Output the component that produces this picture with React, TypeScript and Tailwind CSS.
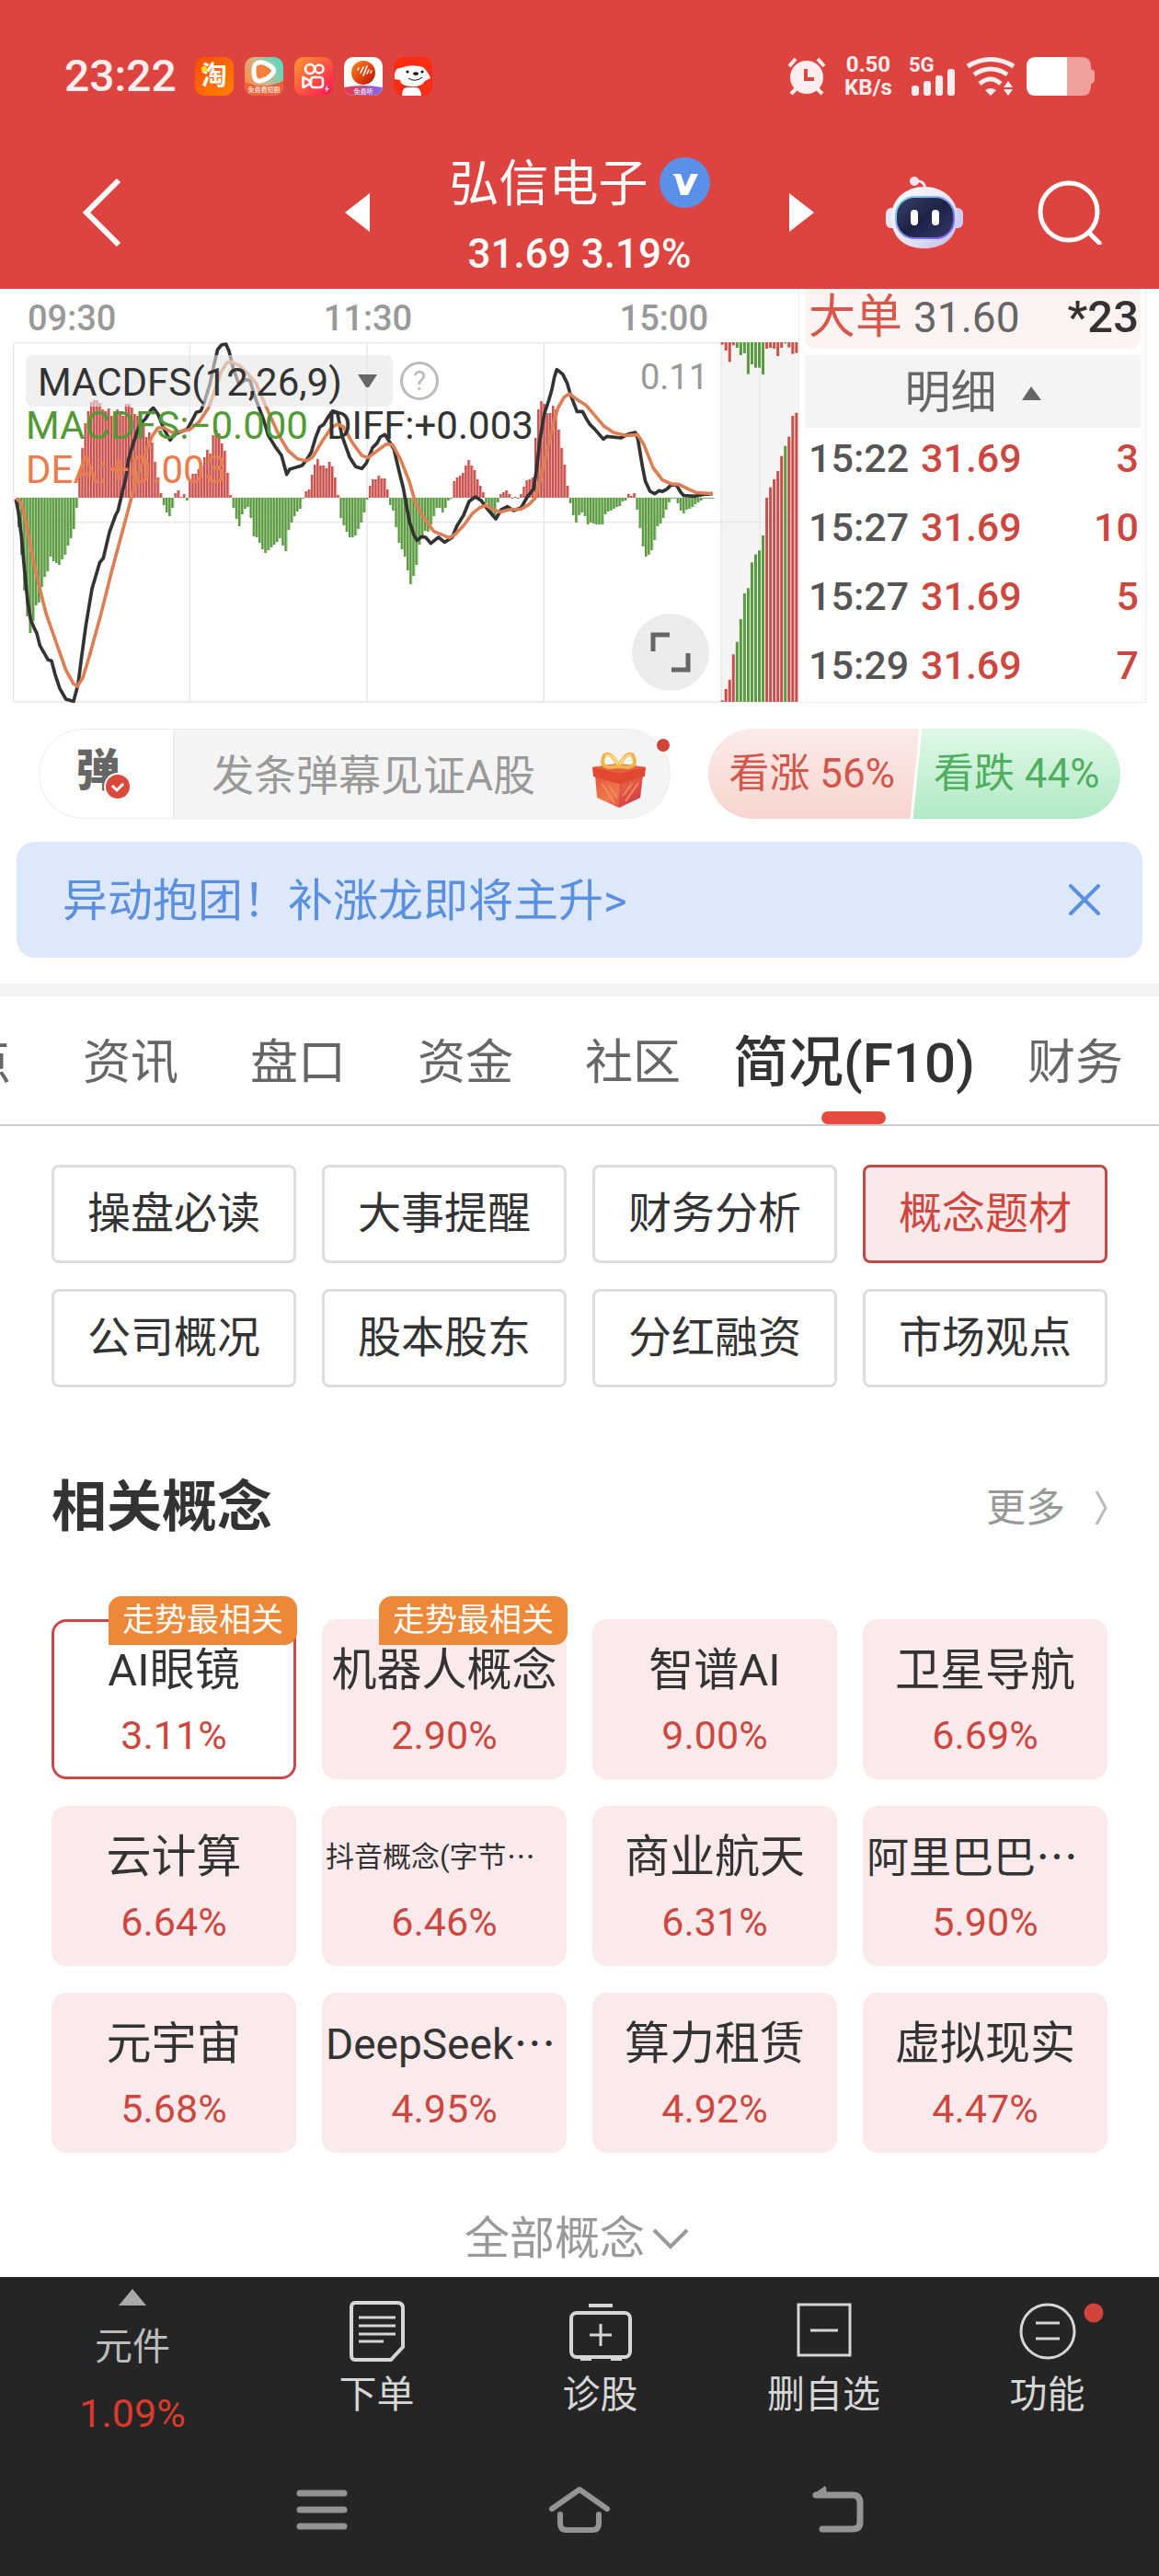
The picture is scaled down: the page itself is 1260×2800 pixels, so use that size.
import { ReactNode } from 'react';

const UP = '#c94f4b';
const DOWN = '#5a9a3f';

// one value per minute, height above or below the zero line
const macd = [
    -32, -62, -101, -129, -147, -134, -117, -114, -97, -86, -80, -64, -69, -71, -73, -67, -62, -52, -44, -34, -11,
    24, 54, 81, 94, 104, 106, 106, 103, 96, 94, 97, 89, 90, 96, 94, 89, 102, 102, 98, 91, 89, 79, 81, 66, 71, 60,
    39, 22, 5, -8, -16, -20, -11, 5, 8, 1, 4, -3, 18, 26, 26, 31, 34, 44, 52, 48, 68, 74, 70, 59, 51, 27, 3, -11,
    -23, -31, -18, -12, -10, -22, -42, -43, -49, -56, -60, -57, -54, -51, -48, -44, -52, -58, -35, -27, -20, -15,
    -12, -1, 7, 9, 25, 36, 42, 35, 35, 32, 39, 34, 22, 3, -22, -30, -37, -43, -43, -41, -34, -27, -16, -2, 13, 20,
    20, 24, 21, 21, 9, -8, -14, -32, -49, -56, -64, -79, -94, -85, -73, -51, -44, -36, -37, -29, -20, -11, -11, -16,
    -11, -3, -1, 18, 22, 24, 27, 35, 41, 35, 30, 20, 13, 6, -6, -14, -20, -19, -5, 4, 6, 8, 4, -1, 1, -1, 4, 12, 19,
    20, 22, 65, 96, 105, 102, 92, 92, 100, 96, 74, 54, 36, 13, -6, -19, -27, -19, -16, -20, -29, -27, -28, -29, -29,
    -29, -18, -15, -14, -12, -10, -9, -4, -3, 4, 2, 5, -13, -33, -53, -64, -62, -57, -46, -31, -28, -22, -13, -5,
    -1, -1, -6, -14, -17, -13, -12, -10, -7, -5, -3, -1, -1, -1, -1,
];

const diffLine =
    '52,698 60,740 70,820 80,930 90,1030 100,1090 110,1115 120,1135 130,1175 157,1222 168,1225 180,1270 195,1315 215,1350 240,1357 255,1300 265,1220 280,1110 300,990 325,905 337,890 357,805 377,750 385,735 400,670 410,630 420,565 430,530 450,470 460,450 475,435 490,410 500,400 515,420 535,470 555,505 570,485 610,470 622,450 640,415 655,410 667,380 685,320 700,250 710,210 722,195 737,192 747,215 760,270 780,325 800,308 815,310 830,360 845,400 860,440 875,490 900,530 918,555 935,617 945,600 985,588 1000,570 1015,545 1030,495 1043,462 1055,455 1070,430 1085,410 1100,415 1115,490 1140,560 1160,592 1180,598 1195,580 1215,530 1230,515 1240,495 1255,487 1270,510 1285,535 1300,600 1315,660 1335,770 1350,815 1360,832 1375,820 1388,822 1405,842 1430,822 1450,838 1475,822 1490,785 1512,750 1530,705 1550,690 1570,703 1590,730 1617,762 1635,732 1655,722 1675,735 1700,725 1720,690 1740,665 1750,600 1760,510 1775,420 1790,375 1800,340 1808,300 1816,275 1835,290 1850,320 1860,355 1882,412 1900,412 1915,440 1925,455 1940,470 1968,502 1980,493 2025,498 2050,485 2072,480 2080,500 2095,590 2105,640 2120,672 2135,680 2150,670 2160,673 2175,665 2188,652 2205,650 2220,675 2230,686 2265,688 2295,682 2325,680';

const deaLine =
    '52,695 65,705 75,730 90,800 105,880 125,970 150,1070 185,1170 215,1255 240,1300 252,1308 270,1280 290,1215 330,1070 365,930 400,800 440,650 470,560 495,495 515,465 535,465 560,480 600,475 620,470 650,445 680,400 700,345 720,285 740,253 755,250 780,262 805,285 835,320 865,390 910,490 940,540 970,566 1000,573 1020,560 1050,510 1080,465 1100,453 1120,462 1150,515 1180,555 1200,563 1230,540 1260,518 1280,520 1305,565 1335,640 1355,710 1380,755 1415,803 1445,815 1465,824 1485,812 1515,780 1540,745 1565,725 1585,718 1605,730 1630,740 1660,732 1700,730 1725,715 1745,695 1760,640 1780,560 1805,450 1820,400 1840,365 1857,354 1885,375 1910,390 1940,425 1970,460 2000,480 2040,490 2080,488 2100,520 2130,595 2160,635 2190,648 2215,650 2245,665 2270,676 2325,680';

// [bottom bar top, top bar end, rising]
const depth: [number, number, boolean][] = [
    [1354, 194, true], [1317, 213, true], [1287, 250, true], [1204, 196, true], [1163, 204, false],
    [1089, 228, false], [1005, 222, false], [988, 290, false], [904, 258, false], [878, 269, false],
    [865, 269, false], [816, 291, false], [693, 207, true], [659, 204, true], [633, 207, true],
    [606, 231, true], [557, 204, true], [524, 190, false], [494, 203, true], [426, 224, true], [416, 221, true],
];

const trades = [
    { time: '15:22', price: '31.69', qty: 3 },
    { time: '15:27', price: '31.69', qty: 10 },
    { time: '15:27', price: '31.69', qty: 5 },
    { time: '15:29', price: '31.69', qty: 7 },
];

const tabs = ['看点', '资讯', '盘口', '资金', '社区', '简况(F10)', '财务'];

const sections = ['操盘必读', '大事提醒', '财务分析', '概念题材', '公司概况', '股本股东', '分红融资', '市场观点'];

interface Concept {
    name: string;
    pct: string;
    hot?: boolean;
    active?: boolean;
    small?: boolean;
    cut?: boolean;
}

const concepts: Concept[] = [
    { name: 'AI眼镜', pct: '3.11%', hot: true, active: true },
    { name: '机器人概念', pct: '2.90%', hot: true },
    { name: '智谱AI', pct: '9.00%' },
    { name: '卫星导航', pct: '6.69%' },
    { name: '云计算', pct: '6.64%' },
    { name: '抖音概念(字节', pct: '6.46%', small: true, cut: true },
    { name: '商业航天', pct: '6.31%' },
    { name: '阿里巴巴', pct: '5.90%', cut: true },
    { name: '元宇宙', pct: '5.68%' },
    { name: 'DeepSeek', pct: '4.95%', cut: true },
    { name: '算力租赁', pct: '4.92%' },
    { name: '虚拟现实', pct: '4.47%' },
];

function AppIcons() {
    return (
        <div className="flex gap-3">
            <div className="relative flex size-[42px] items-center justify-center rounded-[10px] bg-linear-to-br from-[#ff4a00] to-[#ff8200] text-[28px] leading-none font-bold text-white">
                淘
                <span className="absolute top-[10px] left-[7px] size-[6px] rounded-full bg-[#ffe100]" />
            </div>
            <svg className="size-[42px] rounded-[10px]" viewBox="0 0 42 42">
                <defs>
                    <linearGradient id="video" x1="0" y1="0.5" x2="1" y2="0">
                        <stop offset="0" stopColor="#f98f4e" />
                        <stop offset="0.4" stopColor="#c9b98d" />
                        <stop offset="1" stopColor="#3fe0cc" />
                    </linearGradient>
                </defs>
                <rect width="42" height="42" fill="url(#video)" />
                <path d="M0 27 Q20 36 42 26 V42 H0Z" fill="#f0603a" />
                <path
                    d="M14 8 Q19 5 26 9 Q35 14 32 18 Q27 25 18 27 Q11 28 11 17 Q11 9 14 8Z"
                    fill="#f5803c"
                    stroke="#fff"
                    strokeWidth="5"
                    transform="translate(-1 -1)"
                />
                <text x="21" y="38" fontSize="7" fill="#fff" textAnchor="middle">免费看短剧</text>
            </svg>
            <svg className="size-[42px] rounded-[10px]" viewBox="0 0 42 42">
                <defs>
                    <linearGradient id="kuai" x1="0" y1="0" x2="1" y2="1">
                        <stop offset="0" stopColor="#ff9a2e" />
                        <stop offset="1" stopColor="#ff1257" />
                    </linearGradient>
                </defs>
                <rect width="42" height="42" fill="url(#kuai)" />
                <g fill="none" stroke="#fff" strokeWidth="2.6">
                    <circle cx="17" cy="13" r="5" />
                    <circle cx="27" cy="13" r="4.500" />
                    <rect x="18" y="22" width="13" height="11" rx="3" />
                    <path d="M9.500 22 L17 26 V29 L9.500 33Z" strokeLinejoin="round" />
                </g>
                <path d="M36 31 L33 35 H35 L34 38 L38 34 H36Z" fill="#fff" />
            </svg>
            <svg className="size-[42px] rounded-[10px]" viewBox="0 0 42 42">
                <defs>
                    <linearGradient id="ball" x1="0" y1="0" x2="1" y2="1">
                        <stop offset="0" stopColor="#f98c1c" />
                        <stop offset="0.6" stopColor="#e03a0c" />
                        <stop offset="1" stopColor="#a81505" />
                    </linearGradient>
                    <linearGradient id="ribbon" x1="0" y1="0" x2="1" y2="0">
                        <stop offset="0" stopColor="#f0343c" />
                        <stop offset="1" stopColor="#7a6cf5" />
                    </linearGradient>
                </defs>
                <rect width="42" height="42" fill="#fff" />
                <circle cx="21" cy="17" r="13" fill="url(#ball)" />
                <g stroke="#fff" strokeWidth="1.600" strokeLinecap="round">
                    <path d="M15 14 L16 12 M18 17 L21 11 M21 20 L25 10 M25 18 L27 14 M29 17 L30 15" />
                </g>
                <path d="M0 33 Q21 29 42 33 V42 H0Z" fill="url(#ribbon)" />
                <text x="21" y="40" fontSize="7" fill="#fff" textAnchor="middle">免费听</text>
            </svg>
            <svg className="size-[42px] rounded-[10px]" viewBox="0 0 42 42">
                <rect width="42" height="42" fill="#fc2d12" />
                <path d="M9 42 Q9 34 14 33 H25 Q30 35 30 42Z" fill="#fff" />
                <path d="M7 12 Q19 7 32 11 Q38 17 40 23 L34 26 Q30 33 19 32 Q7 31 7 25 L1 24 Q0 12 7 12Z" fill="#fff" />
                <ellipse cx="24" cy="18" rx="3" ry="1.800" fill="#111" />
                <circle cx="15" cy="16" r="1.600" fill="#111" />
                <circle cx="31" cy="16" r="1.600" fill="#111" />
                <path d="M16 23 Q23 28 31 22" fill="none" stroke="#111" strokeWidth="1" />
            </svg>
        </div>
    );
}

function StatusIcons() {
    return (
        <div className="flex h-[42px] items-center text-[#ffeeed]">
            <svg className="h-[42px] w-[42px]" viewBox="0 0 42 42">
                <g stroke="currentColor" strokeWidth="4" fill="none">
                    <path d="M2 10 L9 2 M33 2 L40 10" />
                    <path d="M4 40 L11 33 M38 40 L31 33" />
                </g>
                <circle cx="21" cy="22" r="18" fill="currentColor" />
                <path d="M20 13 V24 H29" stroke="#dd4440" strokeWidth="4" fill="none" />
            </svg>
            <div className="ml-[18px] w-14 text-center text-[24px] leading-[25px] font-bold">
                <div>0.50</div>
                <div>KB/s</div>
            </div>
            <div className="relative ml-4 h-[42px] w-[50px]">
                <span className="absolute top-0 left-0 text-[22px] leading-[18px] font-bold">5G</span>
                <svg className="size-full" viewBox="0 0 50 42">
                    <g fill="currentColor">
                        <rect x="3" y="31" width="8" height="11" rx="3" />
                        <rect x="16" y="26" width="8" height="16" rx="3" />
                        <rect x="29" y="20" width="8" height="22" rx="3" />
                        <rect x="42" y="13" width="8" height="29" rx="3" />
                    </g>
                </svg>
            </div>
            <svg className="ml-3 h-[42px] w-[54px]" viewBox="0 0 54 42">
                <g fill="none" stroke="currentColor" strokeWidth="5">
                    <path d="M2 10 Q27 -5 52 10" />
                    <path d="M9 19 Q27 7 45 19" />
                    <path d="M15 29 Q27 19 38 29" />
                </g>
                <path d="M21 36 Q27 32 33 36 L27 42Z M41 33 L46 26 L51 33Z M41 35 H51 L46 42Z" fill="currentColor" />
            </svg>
            <svg className="ml-3 h-[42px] w-[74px]" viewBox="0 0 74 42">
                <path d="M44 0 H60 Q70 0 70 10 V13 Q74 14 74 17 V25 Q74 28 70 29 V32 Q70 42 60 42 H44Z" fill="#f0a09e" />
                <path d="M10 0 H44 V42 H10 Q0 42 0 32 V10 Q0 0 10 0Z" fill="#fff" />
            </svg>
        </div>
    );
}

function Robot() {
    return (
        <svg className="h-[78px] w-[84px]" viewBox="0 0 84 78">
            <defs>
                <linearGradient id="shell" x1="0" y1="0" x2="1" y2="1">
                    <stop offset="0" stopColor="#ffffff" />
                    <stop offset="0.6" stopColor="#e3e2f6" />
                    <stop offset="1" stopColor="#b9b9ea" />
                </linearGradient>
                <linearGradient id="visor" x1="0" y1="0" x2="1" y2="1">
                    <stop offset="0" stopColor="#3b4266" />
                    <stop offset="0.5" stopColor="#1c2248" />
                    <stop offset="1" stopColor="#343b66" />
                </linearGradient>
                <linearGradient id="rim" x1="0" y1="0" x2="1" y2="1">
                    <stop offset="0" stopColor="#7fe3f5" />
                    <stop offset="1" stopColor="#7a49f0" />
                </linearGradient>
            </defs>
            <path d="M31 5 Q42 3 43 14" fill="none" stroke="#f2dff0" strokeWidth="3" />
            <circle cx="31" cy="5" r="5" fill="#f4e4f3" />
            <rect x="0" y="34" width="14" height="22" rx="6" fill="#e6e4f6" />
            <rect x="70" y="34" width="14" height="22" rx="6" fill="#cfccf0" />
            <path d="M42 11 C62 11 78 24 78 44 C78 66 63 78 42 78 C20 78 6 66 6 44 C6 24 22 11 42 11Z" fill="url(#shell)" />
            <rect x="11" y="22" width="63" height="45" rx="20" fill="url(#visor)" stroke="url(#rim)" strokeWidth="2" />
            <rect x="27" y="36" width="8" height="17" rx="4" fill="#fff" />
            <rect x="50" y="36" width="8" height="17" rx="4" fill="#fff" />
        </svg>
    );
}

function Header() {
    return (
        <header className="bg-[#dd4440] pt-[62px] text-white">
            <div className="flex h-[42px] items-center justify-between pr-[70px] pl-[70px]">
                <div className="flex items-center gap-5">
                    <span className="text-[48px] leading-[42px] font-medium text-[#ffeeed]">23:22</span>
                    <AppIcons />
                </div>
                <StatusIcons />
            </div>
            <div className="mt-11 grid h-[166px] grid-cols-[1fr_510px_1fr] items-center">
                <div className="flex pl-[90px]">
                    <button aria-label="返回">
                        <svg className="h-[76px] w-[42px]" viewBox="0 0 42 76">
                            <path d="M39 3 L4 38 L39 73" fill="none" stroke="currentColor" strokeWidth="6" />
                        </svg>
                    </button>
                </div>
                <div className="flex items-center justify-between">
                    <button aria-label="上一只">
                        <svg className="h-[42px] w-[27px]" viewBox="0 0 27 42">
                            <path d="M27 0 V42 L0 21Z" fill="currentColor" />
                        </svg>
                    </button>
                    <div className="flex flex-col items-center">
                        <h1 className="flex items-center gap-3 text-[54px] leading-[72px]">
                            <span className="pt-1.5">弘信电子</span>
                            <svg className="size-[55px]" viewBox="0 0 55 55">
                                <circle cx="27.500" cy="27.500" r="27.500" fill="#5a90e8" />
                                <path d="M14 18 H23 L28 32 L34 18 H42 L31 41 H23 L18 24 Q17 20 14 18Z" fill="#fff" />
                            </svg>
                        </h1>
                        <div className="mt-3 text-[44px] leading-[54px] font-medium">31.69 3.19%</div>
                    </div>
                    <button aria-label="下一只">
                        <svg className="h-[42px] w-[27px]" viewBox="0 0 27 42">
                            <path d="M0 0 V42 L27 21Z" fill="currentColor" />
                        </svg>
                    </button>
                </div>
                <div className="flex items-center justify-between pr-[62px] pl-[78px]">
                    <button aria-label="智能助手">
                        <Robot />
                    </button>
                    <button aria-label="搜索">
                        <svg className="size-[70px]" viewBox="0 0 70 70">
                            <circle cx="34" cy="34" r="31" fill="none" stroke="currentColor" strokeWidth="5" />
                            <path d="M56 57 L67 68" stroke="currentColor" strokeWidth="5" strokeLinecap="round" />
                        </svg>
                    </button>
                </div>
            </div>
        </header>
    );
}

function MacdChart() {
    return (
        <svg className="h-[392px] w-full" viewBox="42 186 2562 1176" preserveAspectRatio="none">
            <rect x="2352" y="186" width="252" height="1173" fill="#f4f4f4" />
            <g stroke="#e6e6e6" strokeWidth="4" fill="none">
                <path d="M44 188 H2352 M44 1359 H2352 M44 188 V1359 M2352 188 V1359 M44 773 H2604" />
                <path d="M619 188 V1359 M1197 188 V1359 M1774 188 V1359 M2478 188 V1359" />
            </g>
            {macd.map((v, i) => (
                <g key={i} fill={v > 0 ? UP : DOWN}>
                    <rect x={57 + i * 9.472} y={v > 0 ? 693 - v * 3 : 693} width="9.500" height={Math.abs(v) * 3} fillOpacity="0.5" />
                    <rect x={57 + i * 9.472} y={v > 0 ? 693 - v * 3 : 693} width="6" height={Math.abs(v) * 3} />
                </g>
            ))}
            {depth.map(([low, high, rising], i) => (
                <g key={i} fill={rising ? UP : DOWN}>
                    <rect x={2351 + i * 12.1} y={low} width="9" height={1359 - low} />
                    <rect x={2351 + i * 12.1} y="186" width="9" height={high - 186} />
                </g>
            ))}
            <polyline points={diffLine} fill="none" stroke="#333" strokeWidth="11" strokeLinejoin="round" />
            <polyline points={deaLine} fill="none" stroke="#dd7f55" strokeWidth="11" strokeLinejoin="round" />
        </svg>
    );
}

function Quote() {
    return (
        <section className="flex">
            <div className="min-w-0 flex-1">
                <div className="flex h-[58px] items-center justify-between pt-1.5 pr-[98px] pl-[30px] text-[38px] font-medium text-[#999]">
                    <span>09:30</span>
                    <span>11:30</span>
                    <span>15:00</span>
                </div>
                <div className="relative pl-[14px]">
                    <MacdChart />
                    <div className="absolute top-[14px] left-7 flex items-center">
                        <label className="relative flex h-14 w-[399px] items-center rounded-lg bg-[#e6e6e6]/60">
                            <select aria-label="指标" className="h-full w-full appearance-none pt-1 pl-[13px] text-[42px] leading-[52px] text-[#333]">
                                <option>MACDFS(12,26,9)</option>
                            </select>
                            <svg className="pointer-events-none absolute right-[17px] h-[15px] w-[21px]" viewBox="0 0 21 15">
                                <path d="M0 0 H21 L12 14 H9Z" fill="#666" />
                            </svg>
                        </label>
                        <button aria-label="帮助" className="ml-2 flex size-[42px] items-center justify-center rounded-full border-3 border-[#bbb] text-[30px] leading-none text-[#bbb]">
                            ?
                        </button>
                    </div>
                    <div className="absolute top-[67px] left-7 w-[560px] text-[42px] leading-[48px]">
                        <span className="mr-5 text-[#519a35]">MACDFS:−0.000</span>
                        <span className="text-[#333]">DIFF:+0.003</span>
                        <div className="text-[#e87d4f]">DEA:+0.003</div>
                    </div>
                    <span className="absolute top-[14px] right-[98px] text-[38px] leading-[48px] text-[#999]">0.11</span>
                    <button aria-label="全屏" className="absolute right-[97px] bottom-[13px] size-[84px] rounded-full bg-[#ececec]">
                        <svg className="size-full" viewBox="0 0 84 84">
                            <path d="M23 41 V23 H41 M61 43 V61 H43" fill="none" stroke="#666" strokeWidth="5" />
                        </svg>
                    </button>
                </div>
            </div>
            <div className="mr-[14px] w-[378px] border-x border-b border-[#eee] pr-[5px] pl-1.5">
                <div className="flex h-[65px] items-center rounded-b-xl bg-[#fdf3f3] pr-0.5 pb-1 pl-1">
                    <span className="text-[51px] leading-none text-[#d9564b]">大单</span>
                    <span className="ml-3 text-[46px] leading-none text-[#666]">31.60</span>
                    <span className="ml-auto text-[49px] leading-none font-medium text-[#333]">*23</span>
                </div>
                <button className="mt-[7px] flex h-[79px] w-full items-center justify-center gap-[27px] bg-[#f4f4f4] pt-1 text-[50px] text-[#666]">
                    明细
                    <svg className="h-[15px] w-[21px]" viewBox="0 0 21 15">
                        <path d="M10 0 L21 15 H0Z" fill="#666" />
                    </svg>
                </button>
                <table className="-mt-1 w-full text-[43px] font-medium">
                    <tbody>
                        {trades.map((t, i) => (
                            <tr key={i} className="h-[75px]">
                                <td className="w-[120px] p-0 pl-1 text-[#555]">{t.time}</td>
                                <td className="p-0 pl-1.5 text-[#cb473f]">{t.price}</td>
                                <td className="p-0 pr-0.5 text-right text-[#cb473f]">{t.qty}</td>
                            </tr>
                        ))}
                    </tbody>
                </table>
            </div>
        </section>
    );
}

function Gift() {
    return (
        <svg className="h-[62px] w-[58px]" viewBox="0 0 58 62">
            <defs>
                <linearGradient id="box" x1="0" y1="0" x2="1" y2="1">
                    <stop offset="0" stopColor="#e4573a" />
                    <stop offset="0.5" stopColor="#ee7a4c" />
                    <stop offset="1" stopColor="#d22c46" />
                </linearGradient>
            </defs>
            <path d="M3 25 H55 L52 50 L29 61 L5 50Z" fill="url(#box)" />
            <path d="M29 33 L55 25 L52 50 L29 61Z" fill="#cf2f40" fillOpacity="0.4" />
            <path d="M10 34 L24 56 M17 36 L27 50 M50 34 L36 54 M43 35 L33 48" stroke="#f58a5e" strokeWidth="2" />
            <path d="M0 17 L28 13 L58 17 L57 27 L29 35 L1 27Z" fill="#e2472f" />
            <path d="M0 17 L28 13 L58 17 L29 24Z" fill="#e65f43" />
            <g fill="none" stroke="#edb646" strokeWidth="4">
                <path d="M29 16 Q20 -1 13 4 Q7 16 19 17Z" />
                <path d="M29 16 Q37 -1 44 4 Q50 16 38 17Z" />
            </g>
            <path d="M28 14 Q22 2 15 4 M30 14 Q36 2 42 4" stroke="#f9dc8a" strokeWidth="2" fill="none" />
        </svg>
    );
}

function Barrage() {
    return (
        <div className="mt-7 flex h-[98px] pr-[42px] pl-[42px]">
            <div className="relative flex w-[687px] rounded-full border border-[#ececec] bg-[#f4f4f4]">
                <button aria-label="弹幕开关" className="w-[146px] rounded-l-full border-r border-[#e8e8e8] bg-white pr-[18px] pb-1.5">
                    <span className="relative inline-block text-[48px] leading-[56px] font-black text-[#666]">
                        弹
                        <svg className="absolute -right-3 -bottom-1 size-[30px]" viewBox="0 0 30 30">
                            <circle cx="15" cy="15" r="14" fill="#d94a3a" stroke="#fff" strokeWidth="2" />
                            <path d="M9 14 L14 19 L21 12" fill="none" stroke="#fff" strokeWidth="3" />
                        </svg>
                    </span>
                </button>
                <input
                    aria-label="弹幕"
                    placeholder="发条弹幕见证A股"
                    className="min-w-0 flex-1 bg-transparent pt-1 pl-[41px] text-[46px] text-[#333] placeholder:text-[#999] focus:outline-none"
                />
                <button aria-label="礼物" className="pt-[14px] pr-[26px]">
                    <Gift />
                </button>
                <span className="absolute top-[10px] right-0 size-[14px] rounded-full bg-[#d2433c]" />
            </div>
            <div className="ml-[41px] flex flex-1 text-[44px]">
                <button className="-mr-[7px] flex-1 rounded-l-full bg-linear-to-b from-[#fbebe9] to-[#f8d5cf] pr-1 text-[#d3564a] [clip-path:polygon(0_0,100%_0,calc(100%-10px)_100%,0_100%)]">
                    看涨 56%
                </button>
                <button className="flex-1 rounded-r-full bg-linear-to-b from-[#dff8e6] to-[#b0eac4] text-[#4fae5f] [clip-path:polygon(10px_0,100%_0,100%_100%,0_100%)]">
                    看跌 44%
                </button>
            </div>
        </div>
    );
}

function Tabs() {
    return (
        <nav className="flex h-[141px] justify-end overflow-hidden border-b-2 border-[#ccc]">
            {tabs.map((tab) =>
                tab === '简况(F10)' ? (
                    <button key={tab} className="relative shrink-0 px-[18px] pt-1.5 text-[60px] font-medium whitespace-nowrap text-[#333]">
                        {tab}
                        <span className="absolute bottom-0 left-1/2 h-[14px] w-[70px] -translate-x-1/2 rounded-[7px] bg-[#e54c3f]" />
                    </button>
                ) : (
                    <button key={tab} className="shrink-0 px-[39px] pt-1.5 text-[52px] whitespace-nowrap text-[#666]">
                        {tab}
                    </button>
                ),
            )}
        </nav>
    );
}

function ConceptCard({ concept }: { concept: Concept }) {
    return (
        <button
            className={
                concept.active
                    ? 'relative flex h-[174px] flex-col items-center rounded-2xl border-3 border-[#c9484a] bg-white pt-[23px]'
                    : 'relative flex h-[174px] flex-col items-center rounded-2xl bg-[#faeaeb] pt-[26px]'
            }
        >
            {concept.hot && (
                <span
                    className={
                        concept.active
                            ? 'absolute -top-[28px] -right-1 rounded-t-[14px] rounded-br-[14px] bg-[#ee8839] px-[15px] text-[35px] leading-[53px] whitespace-nowrap text-white'
                            : 'absolute -top-[25px] -right-px rounded-t-[14px] rounded-br-[14px] bg-[#ee8839] px-[15px] text-[35px] leading-[53px] whitespace-nowrap text-white'
                    }
                >
                    走势最相关
                </span>
            )}
            <span
                className={
                    concept.small
                        ? 'h-[60px] w-full pl-1 text-left text-[31px] leading-[60px] whitespace-nowrap text-[#333]'
                        : concept.cut
                          ? 'h-[60px] w-full pl-1 text-left text-[46px] leading-[60px] whitespace-nowrap text-[#333]'
                          : 'h-[60px] text-[49px] leading-[60px] whitespace-nowrap text-[#333]'
                }
            >
                {concept.name}
                {concept.cut && <span className="font-['Noto_Sans_CJK_SC'] leading-none">…</span>}
            </span>
            <span className="mt-[15px] text-[43px] leading-[50px] text-[#cb473f]">{concept.pct}</span>
        </button>
    );
}

function ToolItem({ label, children }: { label: string; children: ReactNode }) {
    return (
        <button className="flex flex-1 flex-col items-center pt-[25px]">
            <svg className="h-[68px] w-[72px] overflow-visible" viewBox="0 0 72 68" fill="none" stroke="#d6d6d6" strokeWidth="3">
                {children}
            </svg>
            <span className="mt-[10px] text-[41px] leading-[50px] text-[#d6d6d6]">{label}</span>
        </button>
    );
}

function BottomBar() {
    return (
        <footer className="mt-[5px] bg-[#252525] pb-[46px]">
            <div className="flex h-[171px] items-start">
                <button className="flex w-[288px] flex-col items-center pt-[13px]">
                    <svg className="h-[18px] w-[30px]" viewBox="0 0 30 18">
                        <path d="M15 0 L30 18 H0Z" fill="#aaa" />
                    </svg>
                    <span className="mt-5 text-[41px] leading-[50px] text-[#bbb]">元件</span>
                    <span className="mt-[22px] text-[43px] leading-[50px] text-[#dc3a2c]">1.09%</span>
                </button>
                <ToolItem label="下单">
                    <path d="M12 3 H58 Q64 3 64 9 V51 L51 65 H12 Q8 65 8 60 V9 Q8 3 12 3Z" strokeWidth="4" />
                    <path d="M16 19 H56 M16 28 H56 M16 37 H56 M16 45 H43" />
                </ToolItem>
                <ToolItem label="诊股">
                    <rect x="4" y="14" width="64" height="48" rx="6" strokeWidth="4" />
                    <path d="M23 6 H49" strokeWidth="4" />
                    <path d="M36 26 V50 M24 38 H48 M14 64.500 H26 M47 64.500 H59" />
                </ToolItem>
                <ToolItem label="删自选">
                    <rect x="8" y="5" width="56" height="55" />
                    <path d="M21 33 H51" />
                </ToolItem>
                <ToolItem label="功能">
                    <circle cx="36" cy="34" r="29" />
                    <path d="M23 25 H49 M23 42 H49" />
                    <circle cx="86" cy="14" r="10.500" fill="#d2433c" stroke="none" />
                </ToolItem>
            </div>
            <div className="mt-[55px] flex h-[54px] items-center justify-center gap-[210px]">
                <button aria-label="最近任务">
                    <svg className="h-[54px] w-[70px]" viewBox="0 0 70 54">
                        <path d="M11 9 H59 M11 27 H59 M11 45 H59" stroke="#949494" strokeWidth="7" strokeLinecap="round" />
                    </svg>
                </button>
                <button aria-label="主页">
                    <svg className="h-[54px] w-[70px]" viewBox="0 0 70 54">
                        <g fill="none" stroke="#949494" strokeWidth="6" strokeLinecap="round" strokeLinejoin="round">
                            <path d="M5 26 L35 5 L65 26" />
                            <path d="M14 32 V42 Q14 49 21 49 H49 Q56 49 56 42 V32" />
                        </g>
                    </svg>
                </button>
                <button aria-label="后退">
                    <svg className="h-[54px] w-[70px]" viewBox="0 0 70 54">
                        <path d="M12 11 H52 Q60 11 60 20 V40 Q60 48 52 48 H19" fill="none" stroke="#949494" strokeWidth="7" strokeLinecap="round" />
                        <path d="M8 11 L22 1 Q25 6 22 14 H12Z" fill="#949494" />
                    </svg>
                </button>
            </div>
        </footer>
    );
}

export default function App() {
    return (
        <div className="min-h-screen bg-white font-['Roboto','Noto_Sans_CJK_SC',sans-serif]" lang="zh-CN">
            <Header />
            <Quote />
            <Barrage />
            <div className="mx-[18px] mt-[25px] flex h-[126px] items-center justify-between rounded-[20px] bg-[#dde8fa] pr-[46px] pl-[50px] text-[#5b8fe0]">
                <a href="#" className="pt-1 text-[49px]">
                    异动抱团！补涨龙即将主升&gt;
                </a>
                <button aria-label="关闭">
                    <svg className="size-[34px]" viewBox="0 0 34 34">
                        <path d="M2 2 L32 32 M32 2 L2 32" stroke="currentColor" strokeWidth="4" strokeLinecap="round" />
                    </svg>
                </button>
            </div>
            <div className="mt-7 h-[14px] bg-[#f4f4f4]" />
            <Tabs />
            <main className="px-14 pt-[42px]">
                <div className="grid grid-cols-4 gap-7">
                    {sections.map((name) => (
                        <button
                            key={name}
                            className={
                                name === '概念题材'
                                    ? 'h-[107px] rounded-lg border-3 border-[#be4a47] bg-[#fbe9e9] text-[47px] text-[#cf463f]'
                                    : 'h-[107px] rounded-lg border-3 border-[#ddd] bg-white text-[47px] text-[#333]'
                            }
                        >
                            {name}
                        </button>
                    ))}
                </div>
                <div className="mt-[95px] flex h-[72px] items-center justify-between">
                    <h2 className="text-[60px] leading-[72px] font-bold text-[#333]">相关概念</h2>
                    <a href="#" className="flex items-center gap-8 text-[43px] text-[#999]">
                        更多
                        <svg className="h-[38px] w-[14px]" viewBox="0 0 14 38">
                            <path d="M2 1 L12 19 L2 37" fill="none" stroke="#bbb" strokeWidth="3" />
                        </svg>
                    </a>
                </div>
                <div className="mt-[85px] grid grid-cols-4 gap-x-7 gap-y-[29px]">
                    {concepts.map((concept) => (
                        <ConceptCard key={concept.name} concept={concept} />
                    ))}
                </div>
                <div className="mt-[58px] flex justify-center pr-1.5">
                    <button className="flex h-[72px] items-center gap-2 text-[49px] text-[#999]">
                        全部概念
                        <svg className="h-[24px] w-[40px]" viewBox="0 0 40 24">
                            <path d="M2 2 L20 20 L38 2" fill="none" stroke="currentColor" strokeWidth="4" />
                        </svg>
                    </button>
                </div>
            </main>
            <BottomBar />
        </div>
    );
}
